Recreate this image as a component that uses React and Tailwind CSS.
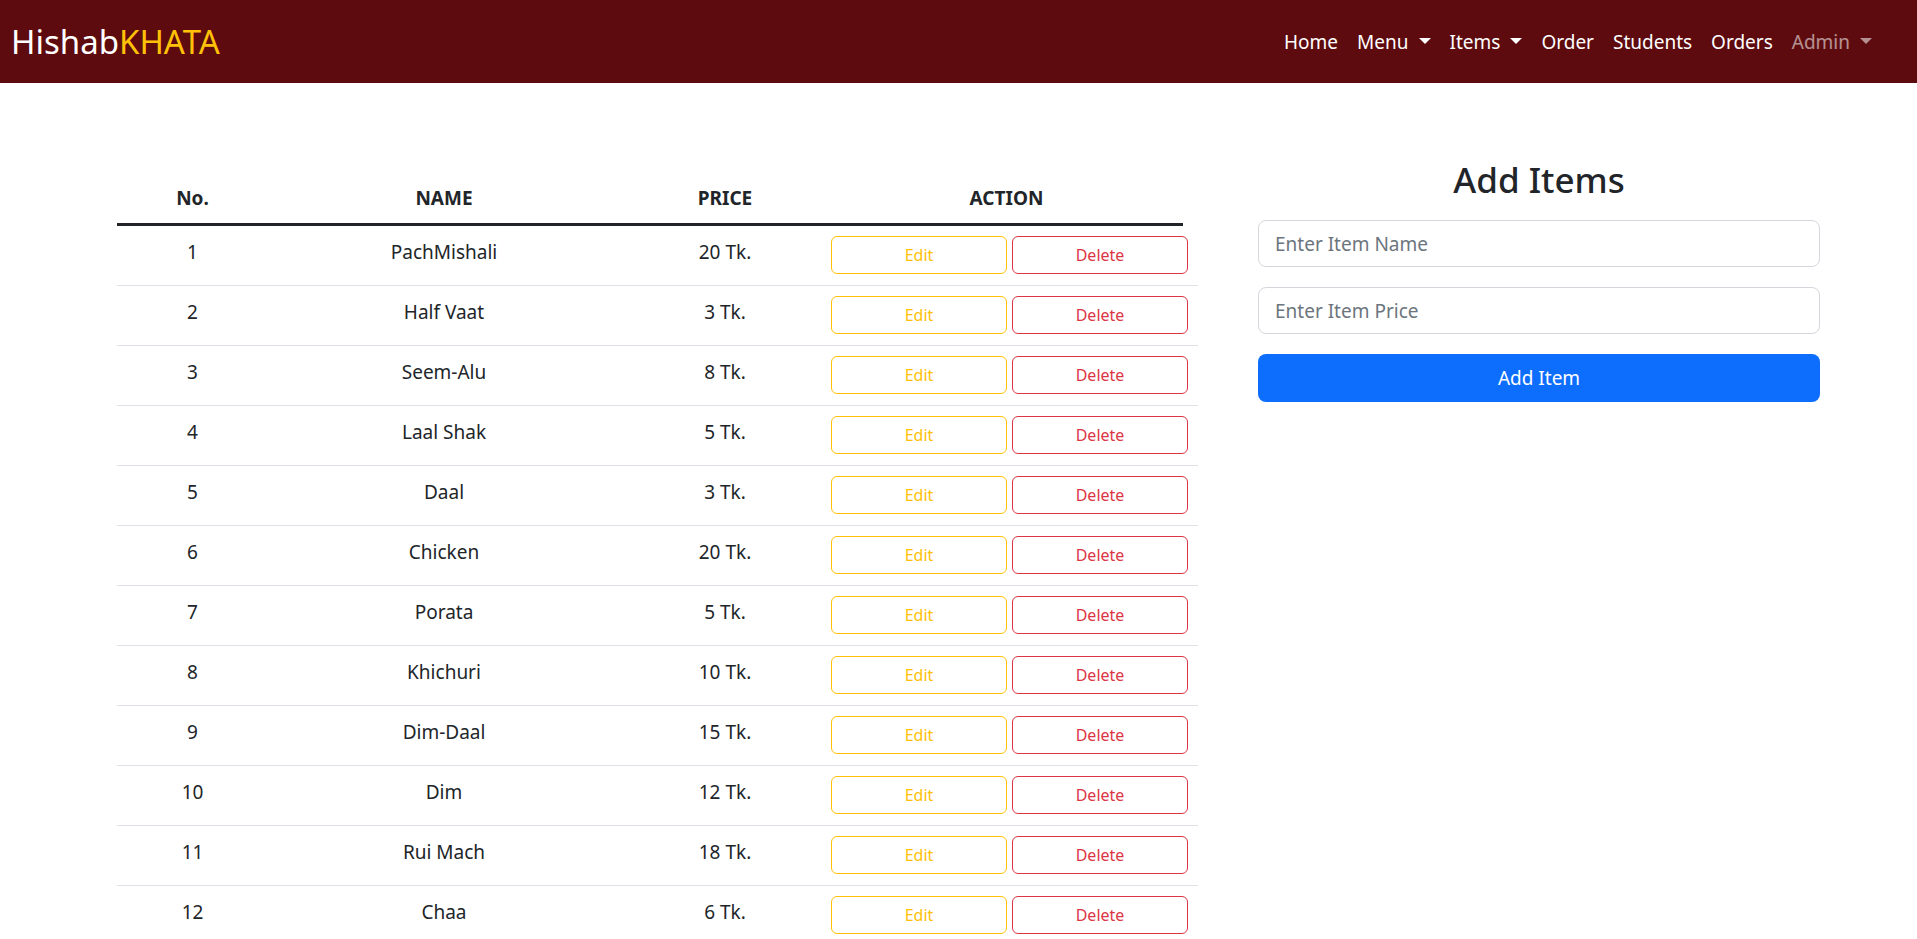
import React from 'react';

const items = [
  { name: 'PachMishali', price: 20 },
  { name: 'Half Vaat', price: 3 },
  { name: 'Seem-Alu', price: 8 },
  { name: 'Laal Shak', price: 5 },
  { name: 'Daal', price: 3 },
  { name: 'Chicken', price: 20 },
  { name: 'Porata', price: 5 },
  { name: 'Khichuri', price: 10 },
  { name: 'Dim-Daal', price: 15 },
  { name: 'Dim', price: 12 },
  { name: 'Rui Mach', price: 18 },
  { name: 'Chaa', price: 6 },
];

function Caret() {
  return (
    <span className="ml-[10px] mb-[3px] inline-block w-0 h-0 border-t-[6px] border-t-current border-x-[6px] border-x-transparent" />
  );
}

function Navbar() {
  const links = [
    { label: 'Home' },
    { label: 'Menu', dropdown: true },
    { label: 'Items', dropdown: true },
    { label: 'Order' },
    { label: 'Students' },
    { label: 'Orders' },
  ];

  return (
    <nav className="h-[83px] bg-[#5d0b0e] flex items-center justify-between pl-[11px] pr-[45px]">
      <a href="#" className="text-[33px] leading-none pb-[1px] text-white">
        Hishab<span className="text-[#ffc107]">KHATA</span>
      </a>

      <ul className="flex items-center gap-[19px] text-[19px] pt-[1px]">
        {links.map((link) => (
          <li key={link.label}>
            <a href="#" className="flex items-center text-white">
              {link.label}
              {link.dropdown && <Caret />}
            </a>
          </li>
        ))}
        <li>
          <a href="#" className="flex items-center text-white/55">
            Admin
            <Caret />
          </a>
        </li>
      </ul>
    </nav>
  );
}

function ItemsTable() {
  return (
    <div className="w-[1081px] pt-[18px] text-[19px] text-[#212529]">
      <div className="w-[1066px] grid grid-cols-[151px_352px_210px_1fr] text-center font-bold leading-[30px] pt-[7px] pb-[10px] border-b-[3px] border-[#212529]">
        <div>No.</div>
        <div>NAME</div>
        <div>PRICE</div>
        <div>ACTION</div>
      </div>

      {items.map((item, i) => (
        <div
          key={item.name}
          className="grid grid-cols-[151px_352px_210px_1fr] text-center leading-[30px] pt-[10px] pb-[11px] border-b border-[#dee2e6]"
        >
          <div className="pt-[1px]">{i + 1}</div>
          <div className="pt-[1px]">{item.name}</div>
          <div className="pt-[1px]">{item.price} Tk.</div>
          <div className="flex gap-[5px] pl-[1px]">
            <button className="w-[176px] h-[38px] rounded-[6px] border border-[#ffc107] text-[#ffc107] text-[16px] leading-[24px]">
              Edit
            </button>
            <button className="w-[176px] h-[38px] rounded-[6px] border border-[#dc3545] text-[#dc3545] text-[16px] leading-[24px]">
              Delete
            </button>
          </div>
        </div>
      ))}
    </div>
  );
}

function AddItemForm() {
  return (
    <div className="ml-[60px] w-[562px] text-[#212529]">
      <h2 className="text-[35px] leading-[44px] font-medium text-center mb-[18px]">Add Items</h2>
      <div className="flex flex-col gap-[20px]">
        <input
          type="text"
          placeholder="Enter Item Name"
          className="h-[47px] w-full px-[16px] text-[19px] rounded-[8px] border border-[#d3d7dc] placeholder:text-[#6c757d] outline-none"
        />
        <input
          type="text"
          placeholder="Enter Item Price"
          className="h-[47px] w-full px-[16px] text-[19px] rounded-[8px] border border-[#d3d7dc] placeholder:text-[#6c757d] outline-none"
        />
        <button className="h-[48px] w-full rounded-[8px] bg-[#0d6efd] text-white text-[19px]">
          Add Item
        </button>
      </div>
    </div>
  );
}

export default function App() {
  return (
    <div className="min-h-screen bg-white font-['Noto_Sans',sans-serif]">
      <Navbar />
      <main className="flex items-start pl-[117px] pt-[75px] pb-[300px]">
        <ItemsTable />
        <AddItemForm />
      </main>
    </div>
  );
}
